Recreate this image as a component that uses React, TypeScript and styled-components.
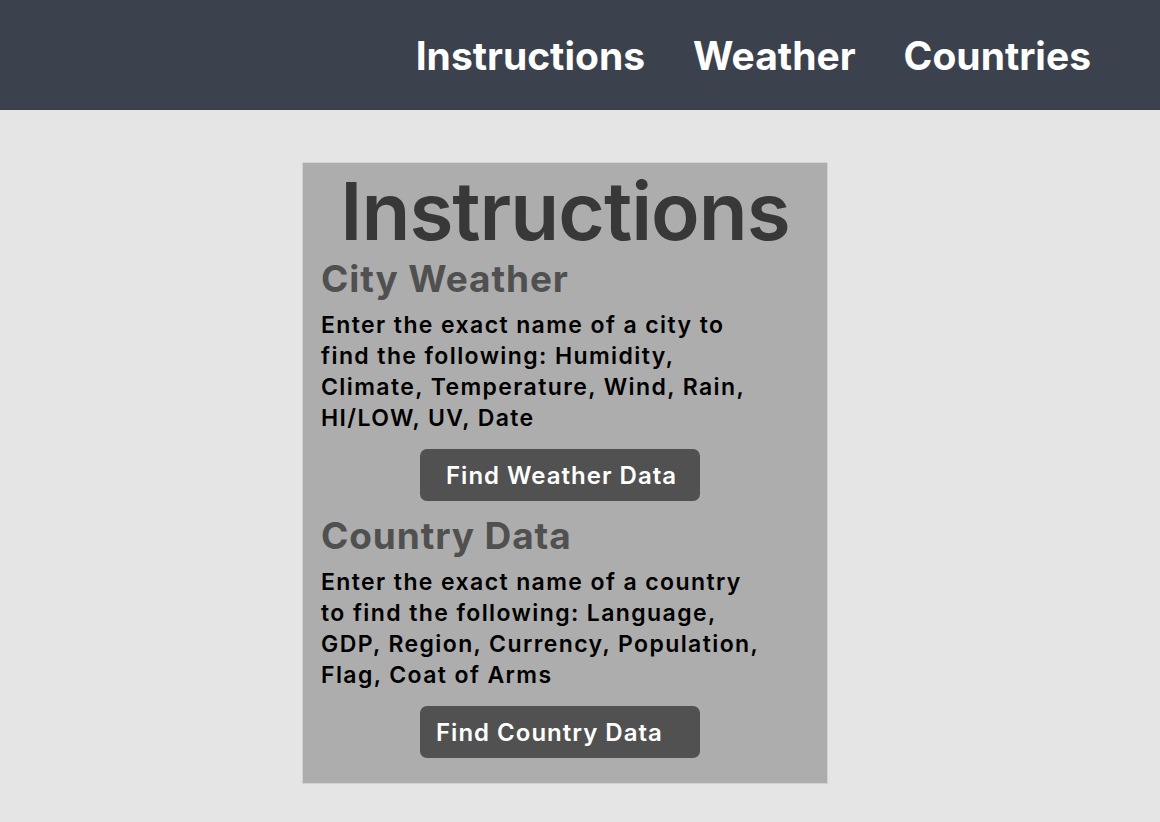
import React from "react";
import styled, { createGlobalStyle } from "styled-components";

const Global = createGlobalStyle`
  html, body { margin: 0; padding: 0; }
  body {
    background: #e5e5e5;
    font-family: Inter, "Noto Sans", "Liberation Sans", sans-serif;
    min-height: 822px;
  }
`;

const Header = styled.header`
  height: 110px;
  background: #3c414e;
  display: flex;
  align-items: center;
  justify-content: flex-end;
  padding-right: 69px;
  box-sizing: border-box;
`;

const Nav = styled.nav`
  display: flex;
  gap: 48px;
`;

const NavLink = styled.a`
  font-family: Inter, "Liberation Sans", sans-serif;
  font-weight: 700;
  font-size: 39px;
  color: #ffffff;
  text-decoration: none;
  line-height: 1;
`;

const Main = styled.main`
  display: flex;
  justify-content: flex-start;
  padding: 52px 0 0 302px;
`;

const Card = styled.section`
  width: 526px;
  box-sizing: border-box;
  background: #adadad;
  border: 1px solid #d2d2d2;
  padding: 0 18px 25px 18px;
  display: flex;
  flex-direction: column;
`;

const Title = styled.h1`
  margin: 0;
  font-size: 80px;
  line-height: 96px;
  font-weight: 600;
  letter-spacing: -1px;
  color: #383838;
  text-align: center;
`;

const Heading = styled.h2<{ $mt?: number }>`
  margin: ${(p) => p.$mt ?? 0}px 0 0 0;
  font-size: 37px;
  line-height: 40px;
  font-weight: 700;
  letter-spacing: 0.9px;
  color: #505050;
`;

const Text = styled.p`
  margin: 11px 0 0 0;
  max-width: 442px;
  font-size: 23px;
  line-height: 31px;
  font-weight: 600;
  letter-spacing: 1.4px;
  color: #000;
`;

const Button = styled.button<{ $pl: number }>`
  margin: 15px 0 0 99px;
  align-self: flex-start;
  width: 280px;
  height: 52px;
  border: none;
  border-radius: 7px;
  background: #515151;
  color: #fff;
  font-family: Inter, "Noto Sans", sans-serif;
  font-size: 24px;
  font-weight: 600;
  letter-spacing: 1px;
  text-align: left;
  padding: 0 0 0 ${(p) => p.$pl}px;
  cursor: pointer;
`;

export default function App() {
  return (
    <>
      <Global />
      <Header>
        <Nav>
          <NavLink href="#">Instructions</NavLink>
          <NavLink href="#">Weather</NavLink>
          <NavLink href="#">Countries</NavLink>
        </Nav>
      </Header>
      <Main>
        <Card>
          <Title>Instructions</Title>
          <Heading>City Weather</Heading>
          <Text>
            Enter the exact name of a city to find the following: Humidity,
            Climate, Temperature, Wind, Rain, HI/LOW, UV, Date
          </Text>
          <Button $pl={26}>Find Weather Data</Button>
          <Heading $mt={15}>Country Data</Heading>
          <Text>
            Enter the exact name of a country to find the following: Language,
            GDP, Region, Currency, Population, Flag, Coat of Arms
          </Text>
          <Button $pl={16}>Find Country Data</Button>
        </Card>
      </Main>
    </>
  );
}
